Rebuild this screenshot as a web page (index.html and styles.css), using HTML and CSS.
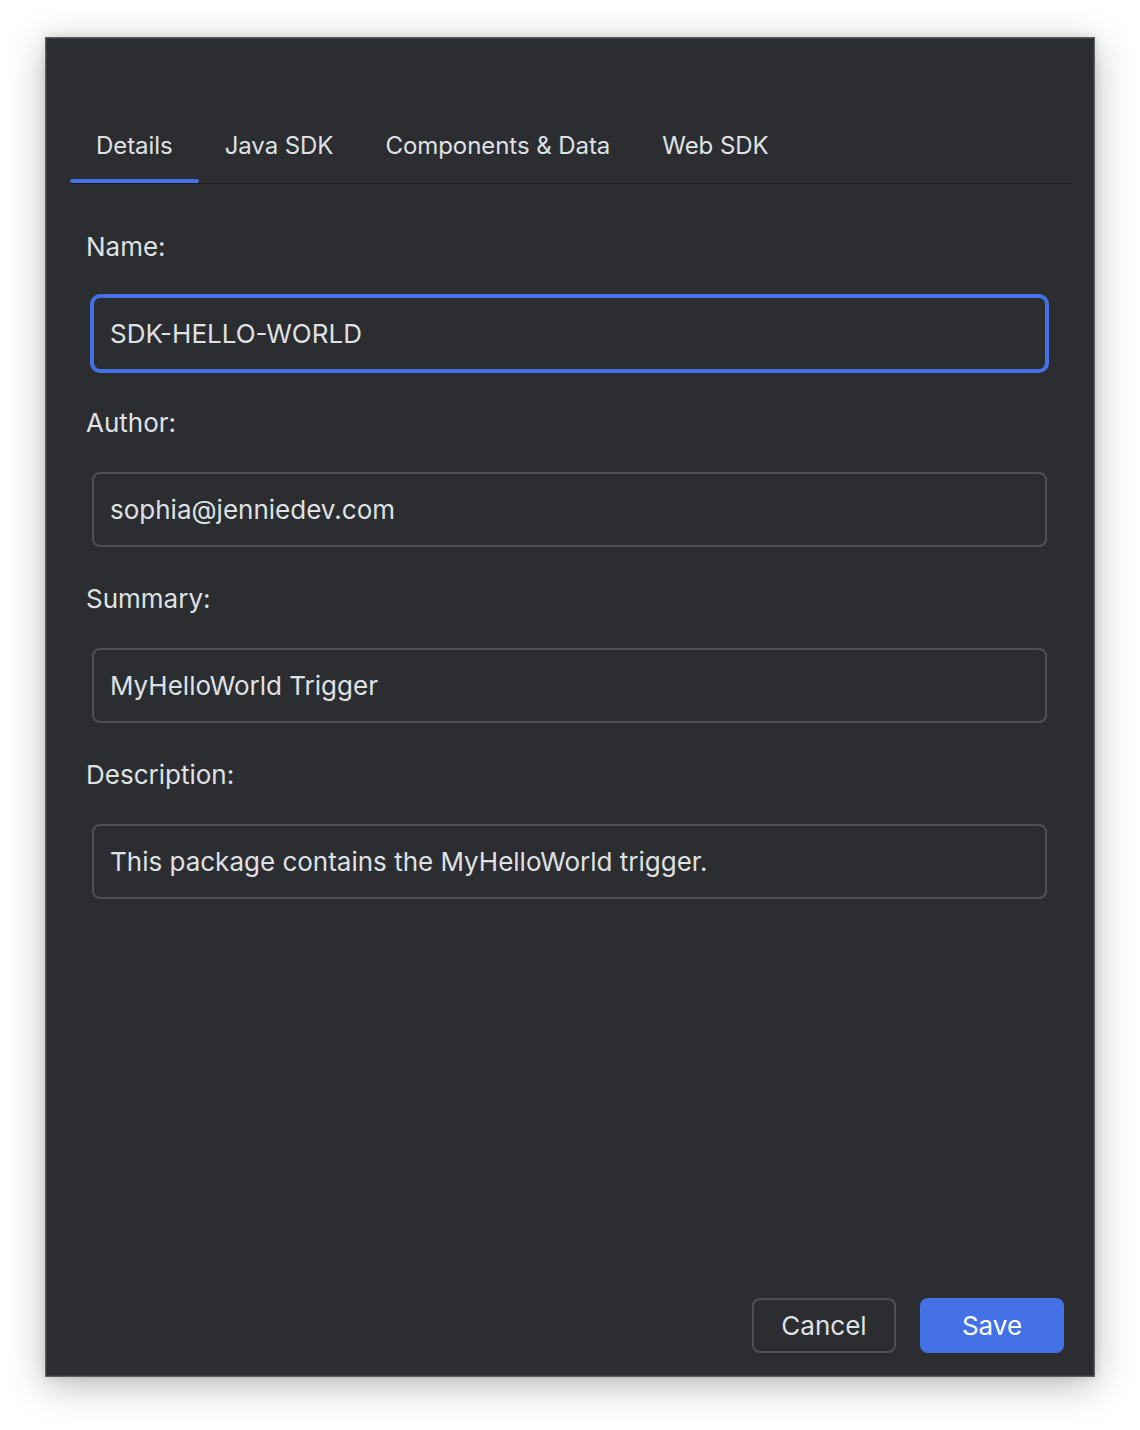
FILE: index.html
```html
<!DOCTYPE html>
<html lang="en">
<head>
<meta charset="utf-8">
<title>Package Details</title>
<link rel="stylesheet" href="styles.css">
</head>
<body>
<div class="window">
  <nav class="tabs">
    <div class="tab active">Details</div>
    <div class="tab">Java SDK</div>
    <div class="tab">Components &amp; Data</div>
    <div class="tab">Web SDK</div>
  </nav>
  <form class="form">
    <div class="field">
      <label class="label">Name:</label>
      <div class="input focused">SDK-HELLO-WORLD</div>
    </div>
    <div class="field">
      <label class="label">Author:</label>
      <div class="input">sophia@jenniedev.com</div>
    </div>
    <div class="field">
      <label class="label">Summary:</label>
      <div class="input">MyHelloWorld Trigger</div>
    </div>
    <div class="field">
      <label class="label">Description:</label>
      <div class="input">This package contains the MyHelloWorld trigger.</div>
    </div>
  </form>
  <div class="footer">
    <button class="btn btn-secondary" type="button">Cancel</button>
    <button class="btn btn-primary" type="button">Save</button>
  </div>
</div>
</body>
</html>
```
FILE: styles.css
```css
* { box-sizing: border-box; }

html, body {
  margin: 0;
  padding: 0;
  background: #ffffff;
}

body {
  min-height: 1430px;
  padding: 37px 0 0 45px;
  font-family: Inter, "Noto Sans", "Liberation Sans", sans-serif;
  font-size: 26px;
  color: #dfe1e5;
}

.window {
  width: 1050px;
  height: 1340px;
  background: #2b2d30;
  border: 1px solid #5f6063;
  box-shadow: inset 0 0 0 1px #393b40, 0 8px 36px rgba(0, 0, 0, 0.28), 0 0 8px rgba(0, 0, 0, 0.12);
  display: flex;
  flex-direction: column;
}

.tabs {
  display: flex;
  margin: 92px 24px 0 24px;
  border-bottom: 1px solid #1e1f22;
}

.tab {
  display: flex;
  flex-direction: column;
  padding: 0 26px;
  font-size: 24px;
  line-height: 32px;
  letter-spacing: -0.06px;
  color: #dfe1e5;
  white-space: nowrap;
}

.tab::after {
  content: "";
  height: 4px;
  margin: 17px -26px 0;
  border-radius: 2px;
  background: transparent;
}

.tab.active::after {
  background: #4472e6;
}

.form {
  display: flex;
  flex-direction: column;
  gap: 36px;
  padding: 47px 0 0 40px;
}

.field {
  display: flex;
  flex-direction: column;
  gap: 33px;
}

.label {
  line-height: 32px;
  height: 32px;
  color: #dfe1e5;
}

.input {
  margin-left: 6px;
  width: 955px;
  height: 75px;
  border: 2px solid #4e5157;
  border-radius: 8px;
  padding: 0 16px;
  display: flex;
  align-items: center;
  color: #dfe1e5;
  background: #2b2d30;
}

.input.focused {
  border-color: #4472e6;
  box-shadow: 0 0 0 2px #4472e6;
}

.footer {
  margin-top: auto;
  display: flex;
  justify-content: flex-end;
  gap: 24px;
  padding: 0 30px 23px 0;
}

.btn {
  width: 144px;
  height: 55px;
  border-radius: 8px;
  font-family: inherit;
  font-size: 26px;
  line-height: 1;
  display: flex;
  align-items: center;
  justify-content: center;
  padding: 0;
  cursor: pointer;
}

.btn-secondary {
  background: #2b2d30;
  border: 2px solid #4e5157;
  color: #dfe1e5;
}

.btn-primary {
  background: #4472e6;
  border: none;
  color: #ffffff;
}
```
